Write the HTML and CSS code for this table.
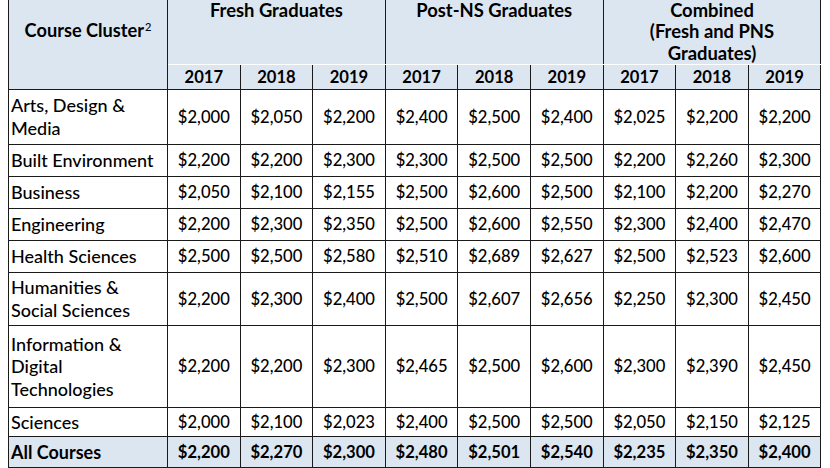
FILE: index.html
```html
<!DOCTYPE html>
<html>
<head>
<meta charset="utf-8">
<link rel="stylesheet" href="styles.css">
</head>
<body>
<div class="page">
<table class="salary">
  <colgroup>
    <col class="c-label">
    <col class="c-year"><col class="c-year"><col class="c-year">
    <col class="c-year"><col class="c-year"><col class="c-year">
    <col class="c-year"><col class="c-year"><col class="c-year">
  </colgroup>
  <thead>
    <tr class="h-group">
      <th rowspan="2" class="h-cluster">Course Cluster<sup>2</sup></th>
      <th colspan="3" class="h-grp">Fresh Graduates</th>
      <th colspan="3" class="h-grp">Post-NS Graduates</th>
      <th colspan="3" class="h-grp">Combined<br>(Fresh and PNS<br>Graduates)</th>
    </tr>
    <tr class="h-years">
      <th>2017</th><th>2018</th><th>2019</th>
      <th>2017</th><th>2018</th><th>2019</th>
      <th>2017</th><th>2018</th><th>2019</th>
    </tr>
  </thead>
  <tbody>
    <tr class="r-arts">
      <td class="lbl">Arts, Design &amp;<br>Media</td>
      <td>$2,000</td><td>$2,050</td><td>$2,200</td>
      <td>$2,400</td><td>$2,500</td><td>$2,400</td>
      <td>$2,025</td><td>$2,200</td><td>$2,200</td>
    </tr>
    <tr class="r-one">
      <td class="lbl">Built Environment</td>
      <td>$2,200</td><td>$2,200</td><td>$2,300</td>
      <td>$2,300</td><td>$2,500</td><td>$2,500</td>
      <td>$2,200</td><td>$2,260</td><td>$2,300</td>
    </tr>
    <tr class="r-one">
      <td class="lbl">Business</td>
      <td>$2,050</td><td>$2,100</td><td>$2,155</td>
      <td>$2,500</td><td>$2,600</td><td>$2,500</td>
      <td>$2,100</td><td>$2,200</td><td>$2,270</td>
    </tr>
    <tr class="r-one">
      <td class="lbl">Engineering</td>
      <td>$2,200</td><td>$2,300</td><td>$2,350</td>
      <td>$2,500</td><td>$2,600</td><td>$2,550</td>
      <td>$2,300</td><td>$2,400</td><td>$2,470</td>
    </tr>
    <tr class="r-one">
      <td class="lbl">Health Sciences</td>
      <td>$2,500</td><td>$2,500</td><td>$2,580</td>
      <td>$2,510</td><td>$2,689</td><td>$2,627</td>
      <td>$2,500</td><td>$2,523</td><td>$2,600</td>
    </tr>
    <tr class="r-two">
      <td class="lbl">Humanities &amp;<br>Social Sciences</td>
      <td>$2,200</td><td>$2,300</td><td>$2,400</td>
      <td>$2,500</td><td>$2,607</td><td>$2,656</td>
      <td>$2,250</td><td>$2,300</td><td>$2,450</td>
    </tr>
    <tr class="r-three">
      <td class="lbl">Information &amp;<br>Digital<br>Technologies</td>
      <td>$2,200</td><td>$2,200</td><td>$2,300</td>
      <td>$2,465</td><td>$2,500</td><td>$2,600</td>
      <td>$2,300</td><td>$2,390</td><td>$2,450</td>
    </tr>
    <tr class="r-sci">
      <td class="lbl">Sciences</td>
      <td>$2,000</td><td>$2,100</td><td>$2,023</td>
      <td>$2,400</td><td>$2,500</td><td>$2,500</td>
      <td>$2,050</td><td>$2,150</td><td>$2,125</td>
    </tr>
    <tr class="r-total">
      <td class="lbl">All Courses</td>
      <td>$2,200</td><td>$2,270</td><td>$2,300</td>
      <td>$2,480</td><td>$2,501</td><td>$2,540</td>
      <td>$2,235</td><td>$2,350</td><td>$2,400</td>
    </tr>
  </tbody>
</table>
</div>
</body>
</html>
```

FILE: styles.css
```css
html, body {
  margin: 0;
  padding: 0;
  background: #ffffff;
}

.page {
  padding-left: 8px;
  overflow: hidden;
  height: 468px;
}

.salary {
  border-collapse: collapse;
  table-layout: fixed;
  width: 813px;
  font-family: Lato, "Open Sans", sans-serif;
  font-size: 16.6px;
  font-weight: 500;
  line-height: 22.5px;
  color: #000;
}

.c-label { width: 159px; }
.c-year { width: 72.6px; }

.salary th,
.salary td {
  border: 1px solid #1a1a1a;
  padding: 0;
  text-align: center;
  vertical-align: middle;
  white-space: nowrap;
}

.salary th {
  background: #dce6f1;
  font-weight: 700;
}

.h-group th {
  vertical-align: top;
  border-top: none;
  border-bottom: 1px solid #ffffff;
}

.h-group { height: 64px; }

.h-grp {
  font-size: 18.4px;
  line-height: 21.3px;
}

.h-cluster {
  font-size: 18.2px;
  padding-top: 19px !important;
  border-bottom: 1px solid #1a1a1a !important;
}

.h-cluster sup {
  font-size: 11px;
  line-height: 0;
  vertical-align: 6px;
  font-weight: 500;
  margin-left: 1px;
}

.h-years { height: 25px; }
.h-years th { border-top: 1px solid #ffffff; }

.lbl {
  text-align: left !important;
  padding-left: 2px !important;
  white-space: normal;
  font-size: 18px;
}

.r-arts { height: 55px; }
.r-one { height: 32px; }
.r-two { height: 53px; }
.r-three { height: 82px; }
.r-sci { height: 29px; }
.r-total { height: 31px; }

.r-total td {
  background: #dce6f1;
  font-weight: 700;
}
```
